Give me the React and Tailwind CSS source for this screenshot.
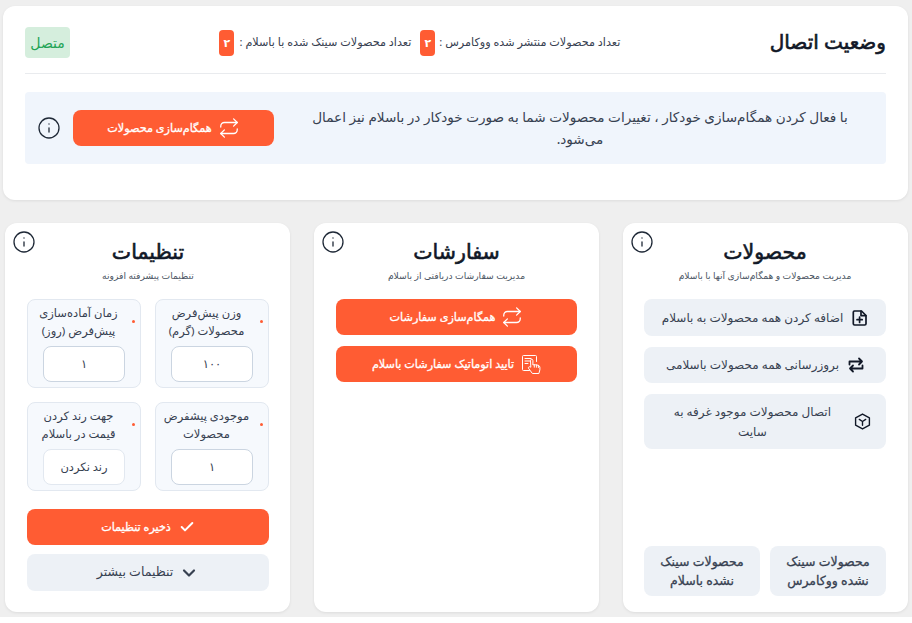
import React from "react";
import { Check, ChevronDown, Info, Repeat } from "lucide-react";

const font = "[font-family:'Noto_Sans','DejaVu_Sans',sans-serif]";

function InfoIcon({ className = "" }) {
  return <Info className={className} size={24} strokeWidth={1.3} color="#1f2937" />;
}

function CardHead({ title, subtitle }) {
  return (
    <div className="text-center">
      <h2 className="-mt-[1px] text-[20.5px] leading-[28px] text-[#111827] [-webkit-text-stroke:0.6px_#111827]">{title}</h2>
      <p className="mt-[4px] text-[9.2px] leading-[14px] text-[#4b5563]">{subtitle}</p>
    </div>
  );
}

function OrangeButton({ children, className = "" }) {
  return (
    <button className={`flex h-9 w-full items-center justify-center gap-[6px] rounded-lg bg-[#ff5c33] text-[11.2px] text-white [-webkit-text-stroke:0.3px_#fff] ${className}`}>
      {children}
    </button>
  );
}

function GrayButton({ icon, children, className = "" }) {
  return (
    <button className={`flex w-full items-center rounded-lg bg-[#edf1f6] text-[12px] leading-[20px] text-[#374151] ${className}`}>
      <span className="shrink-0">{icon}</span>
      <span className="text-center">{children}</span>
    </button>
  );
}

function SettingBox({ line1, line2, value, plain }) {
  return (
    <div className="relative flex h-[89px] flex-col items-center justify-between rounded-lg border border-[#e2e8f0] bg-[#f6f9fd] pb-[5px] pt-[4px]">
      <span className="absolute right-[5px] top-[20px] size-[3px] rounded-full bg-[#ff5c33]" />
      <div className="w-full whitespace-nowrap pr-[11px] text-center text-[11.5px] leading-[18px] text-[#374151]">
        {line1}
        <br />
        {line2}
      </div>
      <div className={`flex h-9 w-[82px] shrink-0 items-center justify-center rounded-lg border bg-white text-[11.5px] text-[#374151] ${plain ? "border-[#e2e8f0]" : "border-[#cbd5e1]"}`}>
        {value}
      </div>
    </div>
  );
}

function FilePlusIcon() {
  return (
    <svg width="16" height="16" viewBox="0 0 16 16" fill="none" stroke="#111827" strokeWidth="1.7" strokeLinejoin="round" strokeLinecap="round">
      <path d="M2.500 1h7l4.500 4.500v8.200a1.300 1.300 0 0 1-1.300 1.300H2.600a1.300 1.300 0 0 1-1.300-1.300V2.300A1.300 1.300 0 0 1 2.500 1z" />
      <path d="M9 1.200v4.400h4.800M7.600 7v5.400M5 9.700h5.200" />
    </svg>
  );
}

function SwapIcon() {
  return (
    <svg width="16" height="16" viewBox="0 0 16 16" fill="none" stroke="#111827" strokeWidth="1.8" strokeLinejoin="round" strokeLinecap="round">
      <path d="M1.500 7.500V4.500h12.500M11 1.500 14 4.500 11 7.500" />
      <path d="M14.500 8.500v3H2M5 8.500 2 11.500l3 3" />
    </svg>
  );
}

function HexIcon() {
  return (
    <svg width="17" height="17" viewBox="0 0 16 16" fill="none" stroke="#111827" strokeWidth="1.3" strokeLinejoin="round" strokeLinecap="round">
      <path d="M8 1 14.500 4.500v7L8 15l-6.500-3.500v-7z" />
      <path d="M5 6 8 8l3-2M8 8v3.600" />
    </svg>
  );
}

function TapIcon() {
  return (
    <svg width="19" height="19" viewBox="0 0 19 19" fill="none" stroke="#fff" strokeWidth="1" strokeLinejoin="round" strokeLinecap="round">
      <path d="M7.500 15.500H1.500a1 1 0 0 1-1-1V1.500a1 1 0 0 1 1-1h12a1 1 0 0 1 1 1v5" />
      <path d="M3 3.500h6M3 6h5M3 8.500h3" />
      <path d="M8.500 5.500a1.200 1.200 0 0 1 2.400 0V10l1.400-.3 1.300.1 1.400.2 1.500.4c.8.300 1.400 1 1.400 2v2.300l-1 3.800h-6.500L6.500 13.300c-.5-1 .7-2.300 2-1.300z" fill="#ff5c33" />
      <path d="M12.300 9.700v2.500M14.400 10v2.300M16.400 10.500v2" />
    </svg>
  );
}

export default function App() {
  return (
    <div dir="rtl" className={`${font} h-[617px] overflow-hidden bg-[#efefef] pl-[3px] pr-[4px] pt-[6px]`}>
      {/* Connection status */}
      <section className="h-[194px] rounded-xl bg-white px-[22px] pt-[21px] shadow-[0_1px_3px_rgba(0,0,0,0.08)]">
        <div className="flex h-[47px] items-start justify-between border-b border-[#e9ebee]">
          <h1 className="text-[20px] leading-[30px] text-[#111827] [-webkit-text-stroke:0.6px_#111827]">وضعیت اتصال</h1>
          <div className="flex items-center pt-[3px] text-[11.2px] text-[#374151]">
            <span className="-translate-y-[1px]">تعداد محصولات منتشر شده ووکامرس :</span>
            <span className="mr-[4px] flex h-[26px] w-[15px] items-center justify-center rounded bg-[#ff5c33] text-[11px] font-bold text-white">۲</span>
            <span className="mr-[9px] -translate-y-[1px]">تعداد محصولات سینک شده با باسلام :</span>
            <span className="mr-[5px] flex h-[26px] w-[15px] items-center justify-center rounded bg-[#ff5c33] text-[11px] font-bold text-white">۲</span>
          </div>
          <span className="flex h-[31px] w-[45px] items-center justify-center rounded bg-[#d5eedd] text-[14px] text-[#22a455]">متصل</span>
        </div>
        <div className="mt-[18px] flex h-[72px] items-center gap-[12px] rounded bg-[#f0f5fc] pl-[12px] pr-[38px]">
          <p className="flex-1 pl-[26px] text-center text-[13.6px] leading-[22px] text-[#374151]">
            با فعال کردن همگام‌سازی خودکار ، تغییرات محصولات شما به صورت خودکار در باسلام نیز اعمال می‌شود.
          </p>
          <OrangeButton className="!w-[201px] shrink-0">
            <Repeat size={22} strokeWidth={1.4} />
            همگام‌سازی محصولات
          </OrangeButton>
          <InfoIcon className="shrink-0" />
        </div>
      </section>

      {/* Lower cards */}
      <div className="ml-[2px] mt-[23px] grid h-[389px] grid-cols-3 gap-6">
        <section className="relative flex flex-col rounded-xl bg-white pb-4 pl-[21px] pr-[22px] pt-[15px] shadow-[0_1px_3px_rgba(0,0,0,0.08)]">
          <InfoIcon className="absolute left-[7px] top-[7px]" />
          <CardHead title="محصولات" subtitle="مدیریت محصولات و همگام‌سازی آنها با باسلام" />
          <div className="mt-[16px] flex flex-col gap-[11px]">
            <GrayButton className="h-[37px] justify-center gap-[9px]" icon={<FilePlusIcon />}>اضافه کردن همه محصولات به باسلام</GrayButton>
            <GrayButton className="h-[36px] justify-center gap-[9px]" icon={<SwapIcon />}>بروزرسانی همه محصولات باسلامی</GrayButton>
            <GrayButton className="h-[55px] gap-[23px] pr-[15px]" icon={<HexIcon />}>اتصال محصولات موجود غرفه به<br />سایت</GrayButton>
          </div>
          <div className="mt-auto grid grid-cols-2 gap-[10px]">
            <button className="h-[50px] rounded-lg bg-[#edf1f6] text-[12.5px] leading-[19px] text-[#374151] [-webkit-text-stroke:0.3px_#374151]">محصولات سینک<br />نشده ووکامرس</button>
            <button className="h-[50px] rounded-lg bg-[#edf1f6] text-[12.5px] leading-[19px] text-[#374151] [-webkit-text-stroke:0.3px_#374151]">محصولات سینک<br />نشده باسلام</button>
          </div>
        </section>

        <section className="relative rounded-xl bg-white px-[22px] pb-4 pt-[15px] shadow-[0_1px_3px_rgba(0,0,0,0.08)]">
          <InfoIcon className="absolute left-[7px] top-[7px]" />
          <CardHead title="سفارشات" subtitle="مدیریت سفارشات دریافتی از باسلام" />
          <div className="mt-[16px] flex flex-col gap-[11px]">
            <OrangeButton>
              <Repeat size={22} strokeWidth={1.4} />
              همگام‌سازی سفارشات
            </OrangeButton>
            <OrangeButton className="gap-[8px]">
              <TapIcon />
              تایید اتوماتیک سفارشات باسلام
            </OrangeButton>
          </div>
        </section>

        <section className="relative rounded-xl bg-white pb-4 pl-[22px] pr-[21px] pt-[15px] shadow-[0_1px_3px_rgba(0,0,0,0.08)]">
          <InfoIcon className="absolute left-[7px] top-[7px]" />
          <CardHead title="تنظیمات" subtitle="تنظیمات پیشرفته افزونه" />
          <div className="mt-[16px] grid grid-cols-2 gap-[14px]">
            <SettingBox line1="وزن پیش‌فرض" line2="محصولات (گرم)" value="۱۰۰" />
            <SettingBox line1="زمان آماده‌سازی" line2="پیش‌فرض (روز)" value="۱" />
            <SettingBox line1="موجودی پیشفرض" line2="محصولات" value="۱" />
            <SettingBox line1="جهت رند کردن" line2="قیمت در باسلام" value="رند نکردن" plain />
          </div>
          <OrangeButton className="mt-[18px] gap-[8px]">
            <Check size={16} strokeWidth={3} />
            ذخیره تنظیمات
          </OrangeButton>
          <button className="mt-[9px] flex h-[37px] w-full items-center justify-center gap-[6px] rounded-lg bg-[#edf1f6] text-[12.5px] text-[#374151]">
            <ChevronDown size={20} strokeWidth={2.6} />
            تنظیمات بیشتر
          </button>
        </section>
      </div>
    </div>
  );
}
